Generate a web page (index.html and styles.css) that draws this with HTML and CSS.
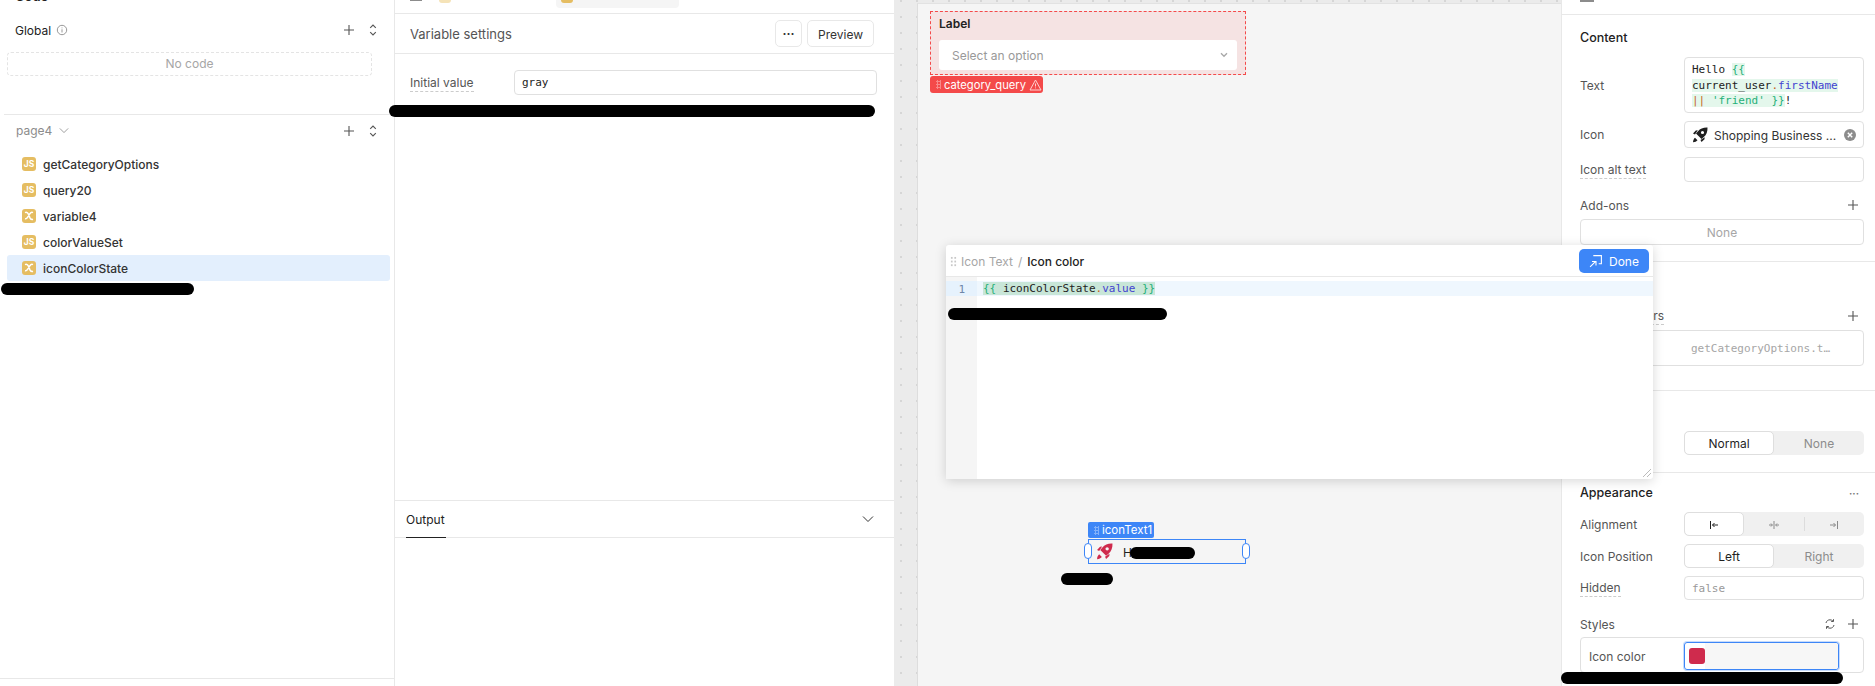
FILE: index.html
```html
<!DOCTYPE html>
<html lang="en">
<head>
<meta charset="utf-8">
<title>Variable settings</title>
<link rel="stylesheet" href="styles.css">
</head>
<body>
<svg class="sprite" width="0" height="0" aria-hidden="true">
  <defs>
    <symbol id="plus" viewBox="0 0 12 12"><path d="M6 1v10M1 6h10" fill="none" stroke="currentColor" stroke-width="1.1"/></symbol>
    <symbol id="sort" viewBox="0 0 12 14"><path d="M3.2 4.8 6 2l2.8 2.8M3.2 9.2 6 12l2.8-2.8" fill="none" stroke="currentColor" stroke-width="1.1"/></symbol>
    <symbol id="chev" viewBox="0 0 12 8"><path d="M1 1.5 6 6.5l5-5" fill="none" stroke="currentColor" stroke-width="1"/></symbol>
    <symbol id="xvar" viewBox="0 0 14 14"><rect width="14" height="14" rx="3" fill="#e5bd62"/><path d="M3 3.6c1.800-.8 2.800 0 3.600 1.800l1.200 3.200c.7 1.700 1.600 2.300 3.200 1.700M11 3.600c-1.200-.6-2.200-.2-3.100 1.100l-2 3.100c-.9 1.600-1.700 2.300-2.900 2" fill="none" stroke="#fff" stroke-width="1.500"/></symbol>
    <symbol id="rocket" viewBox="0 0 16 16"><path fill="currentColor" fill-rule="evenodd" d="M15.500.5c-4-.2-7.300 1-9.500 3.700L4 6.500 9.500 12l2.300-2C14.500 7.800 15.700 4.500 15.500.5zM10.500 3.900a1.600 1.600 0 1 1 0 3.200 1.600 1.600 0 0 1 0-3.200z"/><path fill="currentColor" d="M1 6.500 3.800 3.500l2-.2L3 7.500zM9.500 15l3-2.800.2-2L8.500 13zM1 15.200c.1-2 .8-3.500 2-4.500l2.500 2.500c-1 1.200-2.500 1.900-4.500 2z"/></symbol>
  </defs>
</svg>
<div class="app">
  <aside class="left">
    <div class="clip-title"><span>Code</span></div>
    <div class="sec-row">
      <span class="sec-name">Global</span>
      <svg class="info" width="12" height="12" viewBox="0 0 12 12"><circle cx="6" cy="6" r="4.700" fill="none" stroke="currentColor"/><path d="M6 3.500v.8M6 5.300v3.200" stroke="currentColor"/></svg>
      <span class="spacer"></span>
      <svg class="ico-plus" width="12" height="12"><use href="#plus"/></svg>
      <svg class="ico-sort" width="12" height="14"><use href="#sort"/></svg>
    </div>
    <div class="no-code">No code</div>
    <div class="sec-row page-row">
      <span class="page-name">page4</span>
      <svg class="page-chev" width="10" height="7"><use href="#chev"/></svg>
      <span class="spacer"></span>
      <svg class="ico-plus" width="12" height="12"><use href="#plus"/></svg>
      <svg class="ico-sort" width="12" height="14"><use href="#sort"/></svg>
    </div>
    <ul class="tree">
      <li class="tree-item"><span class="js">JS</span>getCategoryOptions</li>
      <li class="tree-item"><span class="js">JS</span>query20</li>
      <li class="tree-item"><svg width="14" height="14"><use href="#xvar"/></svg>variable4</li>
      <li class="tree-item"><span class="js">JS</span>colorValueSet</li>
      <li class="tree-item selected"><svg width="14" height="14"><use href="#xvar"/></svg>iconColorState</li>
    </ul>
    <div class="left-foot"></div>
  </aside>

  <main class="mid">
    <div class="tabs">
      <span class="tab-bar"></span>
      <span class="tab-dot pale"></span>
      <span class="tab-active"><span class="tab-dot"></span></span>
    </div>
    <header class="mid-head">
      <h1 class="mid-title">Variable settings</h1>
      <button class="btn btn-more">···</button>
      <button class="btn">Preview</button>
    </header>
    <div class="mid-body">
      <div class="var-row">
        <span class="lbl dotted">Initial value</span>
        <div class="field mono var-input">gray</div>
      </div>
    </div>
    <section class="output">
      <div class="output-head">
        <span class="output-tab">Output</span>
        <svg class="output-chev" width="12" height="8"><use href="#chev"/></svg>
      </div>
    </section>
  </main>

  <div class="canvas-wrap">
    <div class="canvas">
      <div class="select-comp">
        <div class="select-label">Label</div>
        <div class="select-box"><span>Select an option</span>
          <svg width="8" height="6" viewBox="0 0 12 8"><path d="M1.500 1.500 6 6l4.500-4.500" fill="none" stroke="#a8a8a8" stroke-width="2"/></svg>
        </div>
      </div>
      <div class="err-tag"><span class="grip"></span>category_query
        <svg width="13" height="12" viewBox="0 0 13 12"><path d="M6.500 1 12 11H1zM6.500 4.500v3M6.500 8.500v.8" fill="none" stroke="#ffd0d0" stroke-width="1"/></svg>
      </div>
      <div class="it-tag"><span class="grip"></span>iconText1</div>
      <div class="it-box">
        <span class="handle handle-l"></span>
        <svg class="it-rocket" width="17" height="17"><use href="#rocket"/></svg>
        <span class="it-text">Hello friend!</span>
        <span class="handle handle-r"></span>
      </div>
    </div>
  </div>

  <aside class="right">
    <div class="right-top"><span class="top-ico"></span><span class="top-name">iconText1</span></div>
    <section class="r-sec sec-content">
      <h2 class="r-title">Content</h2>
      <div class="r-row">
        <span class="lbl">Text</span>
        <div class="field mono code-field">Hello <span class="hl gr">{{ </span><br><span class="hl">current_user<span class="or">.</span><span class="bl">firstName </span></span><br><span class="hl"><span class="or">||</span> <span class="gr">'friend' }}</span></span>!</div>
      </div>
      <div class="r-row row-icon">
        <span class="lbl">Icon</span>
        <div class="field icon-field">
          <svg width="16" height="16"><use href="#rocket"/></svg>
          <span class="icon-name">Shopping Business ...</span>
          <svg class="clear" width="12" height="12" viewBox="0 0 12 12"><circle cx="6" cy="6" r="6" fill="#8c8c8c"/><path d="M3.800 3.800 8.200 8.200M8.200 3.800 3.800 8.200" stroke="#fff" stroke-width="1.400"/></svg>
        </div>
      </div>
      <div class="r-row row-alt">
        <span class="lbl dotted">Icon alt text</span>
        <div class="field alt-field"></div>
      </div>
      <div class="r-head head-addons">
        <span class="lbl">Add-ons</span>
        <svg class="ico-plus" width="12" height="12"><use href="#plus"/></svg>
      </div>
      <div class="field none-box">None</div>
    </section>
    <section class="r-sec sec-events">
      <div class="r-head">
        <span class="lbl dotted">Event handlers</span>
        <svg class="ico-plus" width="12" height="12"><use href="#plus"/></svg>
      </div>
      <div class="field event-box mono">getCategoryOptions.t…</div>
    </section>
    <section class="r-sec sec-spacing">
      <div class="r-row">
        <span class="lbl">Margin</span>
        <div class="seg seg-two"><span class="seg-on">Normal</span><span>None</span></div>
      </div>
    </section>
    <section class="r-sec sec-appear">
      <div class="r-head head-appear">
        <h2 class="r-title">Appearance</h2>
        <span class="more">···</span>
      </div>
      <div class="r-row">
        <span class="lbl">Alignment</span>
        <div class="seg seg-three">
          <span class="seg-on"><svg width="10" height="10" viewBox="0 0 10 10"><path d="M1.500 1v8M9 5H3.500M5.500 3 3.500 5l2 2" fill="none" stroke="#222"/></svg></span>
          <span><svg width="12" height="10" viewBox="0 0 12 10"><path d="M6 1v8M1 5h3M11 5H8M3 3.500 4.500 5 3 6.500M9 3.500 7.500 5 9 6.500" fill="none" stroke="#8a8a8a"/></svg></span>
          <span class="seg-split"><svg width="10" height="10" viewBox="0 0 10 10"><path d="M8.500 1v8M1 5h5.500M4.500 3l2 2-2 2" fill="none" stroke="#8a8a8a"/></svg></span>
        </div>
      </div>
      <div class="r-row row-gap">
        <span class="lbl">Icon Position</span>
        <div class="seg seg-two"><span class="seg-on">Left</span><span>Right</span></div>
      </div>
      <div class="r-row row-gap">
        <span class="lbl dotted">Hidden</span>
        <div class="field mono hidden-field">false</div>
      </div>
      <div class="r-head head-styles">
        <span class="lbl">Styles</span>
        <svg class="refresh" width="12" height="12" viewBox="0 0 12 12"><path d="M2 5c.4-2 2-3.200 4-3.200 1.200 0 2.200.5 3 1.400M10 7c-.4 2-2 3.200-4 3.200-1.200 0-2.200-.5-3-1.400M9.500 1.200v2.300H7.200M2.500 10.800V8.500h2.300" fill="none" stroke="#555"/></svg>
        <svg class="ico-plus" width="12" height="12"><use href="#plus"/></svg>
      </div>
      <div class="styles-box">
        <span class="lbl style-lbl">Icon color</span>
        <div class="color-input"><span class="swatch"></span><span class="color-val"></span></div>
      </div>
    </section>
  </aside>

  <div class="popover">
    <div class="pop-head">
      <span class="grip grip-gray"></span>
      <span class="crumb">Icon Text</span><span class="crumb sep">/</span><span class="crumb-now">Icon color</span>
      <span class="spacer"></span>
      <button class="done">
        <svg width="14" height="14" viewBox="0 0 13 13"><path d="M4 1.500h7.500V9H9M1 12l5-5M2.800 7h3.700v3.700" fill="none" stroke="#fff"/></svg>
        Done
      </button>
    </div>
    <div class="editor">
      <div class="gutter"><div class="ln">1</div></div>
      <div class="code"><div class="code-line mono"><span class="hl-dark"><span class="gr">{{ </span>iconColorState<span class="or">.</span><span class="bl">value</span><span class="gr"> }}</span></span></div></div>
    </div>
    <svg class="resize" width="10" height="10" viewBox="0 0 10 10"><path d="M1 9 9 1M5 9 9 5" stroke="#bbb"/></svg>
  </div>

  <span class="redact r1"></span>
  <span class="redact r2"></span>
  <span class="redact r3"></span>
  <span class="redact r4"></span>
  <span class="redact r5"></span>
  <span class="redact r6"></span>
</div>
</body>
</html>
```
FILE: styles.css
```css
* { box-sizing: border-box; }
html, body { margin: 0; height: 100%; background: #fff; }
body { font-family: Inter, "Liberation Sans", sans-serif; font-size: 12px; color: #1f1f1f; overflow: hidden; }
.sprite { position: absolute; }
h1, h2, ul { margin: 0; padding: 0; font-weight: 500; }
button { font: inherit; }
.spacer { flex: 1; }
.mono { font-family: "DejaVu Sans Mono", "Liberation Mono", monospace; font-size: 11px; }

.app { position: relative; display: flex; width: 1875px; height: 686px; overflow: hidden; }

/* left */
.left { width: 395px; flex: none; border-right: 1px solid #e8e8e8; display: flex; flex-direction: column; }
.clip-title { height: 2px; overflow: hidden; padding-left: 15px; font-weight: 600; font-size: 13px; }
.clip-title span { display: block; margin-top: -12px; }
.sec-row { display: flex; align-items: center; height: 20px; margin-top: 18px; padding: 0 15px; color: #555; }
.sec-name { font-size: 12px; color: #222; }
.info { margin-left: 5px; color: #999; }
.ico-plus { color: #555; flex: none; }
.ico-sort { color: #555; margin-left: 12px; flex: none; }
.no-code { margin: 12px 0 0 7px; width: 365px; height: 24px; border: 1px dashed #e4e4e4; border-radius: 4px; color: #a6a6a6; text-align: center; line-height: 22px; }
.page-row { margin: 38px 0 0 4px; padding: 6px 15px 0 12px; height: 26px; border-top: 1px solid #e8e8e8; }
.page-name { color: #8c8c8c; font-size: 12px; }
.page-chev { margin-left: 7px; color: #8c8c8c; }
.tree { list-style: none; margin-top: 11px; flex: 1; }
.tree-item { display: flex; align-items: center; gap: 7px; height: 26px; margin-left: 7px; width: 383px; padding-left: 15px; color: #333; border-radius: 3px; }
.tree-item.selected { background: #e3effd; }
.js { width: 14px; height: 14px; border-radius: 3px; background: #e5bd62; color: #fff; font-size: 8.500px; font-weight: 700; text-align: center; line-height: 14px; flex: none; }
.left-foot { height: 8px; border-top: 1px solid #e8e8e8; }

/* middle */
.mid { width: 499px; flex: none; display: flex; flex-direction: column; }
.tabs { height: 14px; flex: none; border-bottom: 1px solid #e8e8e8; display: flex; align-items: flex-start; padding-left: 15px; overflow: hidden; }
.tab-bar { width: 12px; height: 1px; background: #8c8c8c; }
.tab-dot { display: block; width: 12px; height: 3px; background: #e5bd62; border-radius: 0 0 3px 3px; }
.tab-dot.pale { background: #f5e3b8; margin-left: 17px; }
.tab-active { width: 123px; height: 8px; margin-left: 105px; padding-left: 5px; background: #f5f5f5; border-radius: 0 0 4px 4px; }
.mid-head { height: 40px; flex: none; display: flex; align-items: center; padding: 0 20px 0 15px; border-bottom: 1px solid #e8e8e8; }
.mid-title { flex: 1; font-size: 13px; font-weight: 400; color: #545454; }
.btn { height: 27px; border: 1px solid #e8e8e8; border-radius: 5px; background: #fff; color: #333; padding: 2px 10px 0; line-height: 1; }
.btn-more { width: 27px; padding: 0; margin-right: 5px; font-weight: 700; }
.mid-body { flex: 1; padding: 16px 17px 0 15px; }
.var-row { display: grid; grid-template-columns: 104px 1fr; align-items: center; }
.lbl { color: #555; font-size: 12px; line-height: 16px; padding-top: 1px; justify-self: start; }
.dotted { border-bottom: 1px dashed #ccc; }
.field { border: 1px solid #e0e0e0; border-radius: 4px; background: #fff; }
.var-input { height: 25px; line-height: 24px; padding-left: 7px; color: #222; }
.output { height: 186px; flex: none; border-top: 1px solid #e8e8e8; }
.output-head { height: 37px; border-bottom: 1px solid #e8e8e8; display: flex; align-items: center; justify-content: space-between; padding: 0 20px 0 11px; }
.output-tab { height: 37px; line-height: 38px; width: 40px; border-bottom: 1px solid #222; color: #222; }
.output-chev { color: #333; }

/* canvas */
.canvas-wrap { width: 667px; flex: none; padding: 3px 0 0 23px; background-color: #ebebeb; background-image: radial-gradient(circle at 1px 1px, #d6d6d6 .8px, transparent 1px); background-size: 16px 16px; background-position: 6px 0; }
.canvas { position: relative; height: 100%; background: #f5f5f5; border-left: 1px solid #ddd; border-top: 1px solid #e2e2e2; }
.select-comp { position: absolute; left: 12px; top: 7px; width: 316px; height: 64px; border: 1px dashed #f44a4a; background: #f5e3e3; padding: 4px 8px; }
.select-label { font-size: 12px; font-weight: 600; line-height: 16px; color: #222; }
.select-box { margin-top: 8px; height: 30px; background: #fff; border-radius: 3px; display: flex; align-items: center; justify-content: space-between; padding: 0 9px 0 13px; color: #999; }
.err-tag { position: absolute; left: 12px; top: 72px; height: 17px; width: 113px; background: #f44a4a; color: #fff; border-radius: 3px; font-size: 11.200px; display: flex; align-items: center; gap: 3px; }
.grip { display: inline-block; width: 5px; height: 9px; margin-left: 6px; background-image: radial-gradient(circle, rgba(255,255,255,.35) 1px, transparent 1.100px); background-size: 3px 3px; flex: none; }
.it-tag { position: absolute; left: 170px; top: 518px; width: 66px; height: 16px; background: #3d86f7; color: #fff; border-radius: 2px; display: flex; align-items: center; gap: 3px; font-size: 11.500px; }
.it-box { position: absolute; left: 170px; top: 535px; width: 158px; height: 25px; border: 1px solid #3d86f7; display: flex; align-items: center; padding-left: 7px; }
.it-rocket { color: #cf2b4d; }
.it-text { margin-left: 10px; padding-top: 2px; color: #222; font-size: 12px; }
.handle { position: absolute; top: 3px; width: 8px; height: 16px; border: 1px solid #3d86f7; border-radius: 4px; background: #fff; }
.handle-l { left: -5px; }
.handle-r { right: -5px; }

/* right */
.right { flex: 1; border-left: 1px solid #e8e8e8; min-width: 0; }
.right-top { height: 15px; border-bottom: 1px solid #e8e8e8; overflow: hidden; padding-left: 18px; font-size: 12px; font-weight: 500; display: flex; align-items: flex-start; }
.top-ico { width: 14px; height: 2px; background: #8c8c8c; flex: none; }
.top-name { display: block; margin: -12px 0 0 10px; }
.r-sec { padding: 0 11px 0 18px; border-bottom: 1px solid #e8e8e8; }
.r-title { font-size: 12.500px; line-height: 16px; color: #222; }
.r-row { display: grid; grid-template-columns: 104px 1fr; align-items: center; }
.r-head { display: flex; justify-content: space-between; align-items: center; height: 16px; padding-right: 5px; }
.sec-content { padding-top: 15px; height: 247px; }
.sec-content .r-title { margin-bottom: 11px; }
.code-field { height: 56px; padding: 4px 7px; line-height: 15.500px; color: #222; }
.hl { background: #e4f7ec; }
.hl-dark { background: #c8e6d8; }
.gr { color: #1fb079; }
.or { color: #c7651b; }
.bl { color: #4343d0; }
.row-icon { margin-top: 8px; }
.icon-field { height: 27px; display: flex; align-items: center; padding: 0 7px; color: #1f1f1f; }
.icon-name { margin-left: 6px; flex: 1; color: #333; padding-top: 1px; }
.row-alt { margin-top: 9px; }
.alt-field { height: 25px; }
.head-addons { margin-top: 15px; margin-bottom: 6px; }
.none-box { height: 26px; line-height: 25px; text-align: center; color: #a6a6a6; }
.sec-events { padding-top: 46px; height: 129px; }
.event-box { height: 36px; margin-top: 6px; line-height: 35px; padding-left: 110px; color: #a6a6a6; }
.sec-spacing { padding-top: 40px; height: 82px; }
.seg { display: grid; height: 24px; background: #f0f0f0; border-radius: 5px; color: #8c8c8c; text-align: center; }
.seg > span { display: flex; align-items: center; justify-content: center; padding-top: 1px; }
.seg-two { grid-template-columns: 1fr 1fr; }
.seg-three { grid-template-columns: 1fr 1fr 1fr; }
.seg-on { background: #fff; border: 1px solid #dedede; border-radius: 5px; color: #1f1f1f; }
.seg-split { position: relative; }
.seg-split::before { content: ""; position: absolute; left: 0; top: 5px; height: 14px; border-left: 1px solid #dcdcdc; }
.sec-appear { padding-top: 12px; border-bottom: 0; }
.head-appear { margin-bottom: 11px; }
.more { color: #777; font-weight: 700; font-size: 10px; line-height: 1; }
.row-gap { margin-top: 8px; }
.hidden-field { height: 24px; line-height: 23px; padding-left: 7px; color: #999; }
.head-styles { margin-top: 16px; justify-content: flex-end; gap: 11px; }
.head-styles .lbl { margin-right: auto; }
.styles-box { position: relative; margin-top: 5px; height: 36px; border: 1px solid #e0e0e0; border-radius: 4px; display: flex; align-items: center; padding: 0 0 0 8px; }
.style-lbl { width: 95px; flex: none; padding-top: 3px; }
.color-input { width: 155px; height: 28px; border: 1px solid #3d86f7; box-shadow: 0 0 0 1px #c8dcfb; border-radius: 3px; display: flex; align-items: center; padding-left: 4px; margin-top: 1px; }
.swatch { width: 16px; height: 16px; border-radius: 3px; background: #cf2b4d; flex: none; }
.color-val { flex: 1; height: 26px; background: #f7f7f7; border-radius: 0 3px 3px 0; }

/* popover */
.popover { position: absolute; left: 946px; top: 245px; width: 707px; height: 234px; background: #fff; border-radius: 3px; box-shadow: 0 2px 12px rgba(0,0,0,.16); display: flex; flex-direction: column; }
.pop-head { height: 32px; flex: none; display: flex; align-items: center; padding: 1px 4px 0 0; border-bottom: 1px solid #e8e8e8; }
.grip-gray { margin: 0 4px 0 4px; width: 7px; height: 11px; background-image: radial-gradient(circle, #c8c8c8 1.200px, transparent 1.300px); background-size: 3.500px 3.700px; }
.crumb, .crumb-now { padding-top: 1px; }
.crumb { color: #a6a6a6; }
.crumb.sep { margin: 0 5px; }
.crumb-now { color: #222; font-weight: 500; }
.done { display: flex; align-items: center; gap: 6px; width: 70px; height: 24px; justify-content: center; border: 0; border-radius: 5px; background: #3d86f7; color: #fff; }
.editor { flex: 1; display: flex; padding: 0; }
.gutter { width: 31px; background: #f5f5f5; padding-top: 4px; }
.ln { height: 15px; background: #e6f2fd; color: #6f86a8; font-family: "DejaVu Sans Mono", monospace; font-size: 11px; line-height: 17px; text-align: right; padding-right: 12px; }
.code { flex: 1; padding-top: 4px; }
.code-line { height: 15px; line-height: 16px; background: #eff7fe; padding-left: 6px; color: #222; }
.resize { position: absolute; right: 1px; bottom: 1px; }

/* redaction strokes */
.redact { position: absolute; height: 12px; border-radius: 6px; background: #000; }
.r1 { left: 1px; top: 283px; width: 193px; }
.r2 { left: 389px; top: 105px; width: 486px; }
.r3 { left: 948px; top: 308px; width: 219px; }
.r4 { left: 1130px; top: 547px; width: 65px; }
.r5 { left: 1061px; top: 573px; width: 52px; }
.r6 { left: 1561px; top: 672px; width: 282px; }
```
